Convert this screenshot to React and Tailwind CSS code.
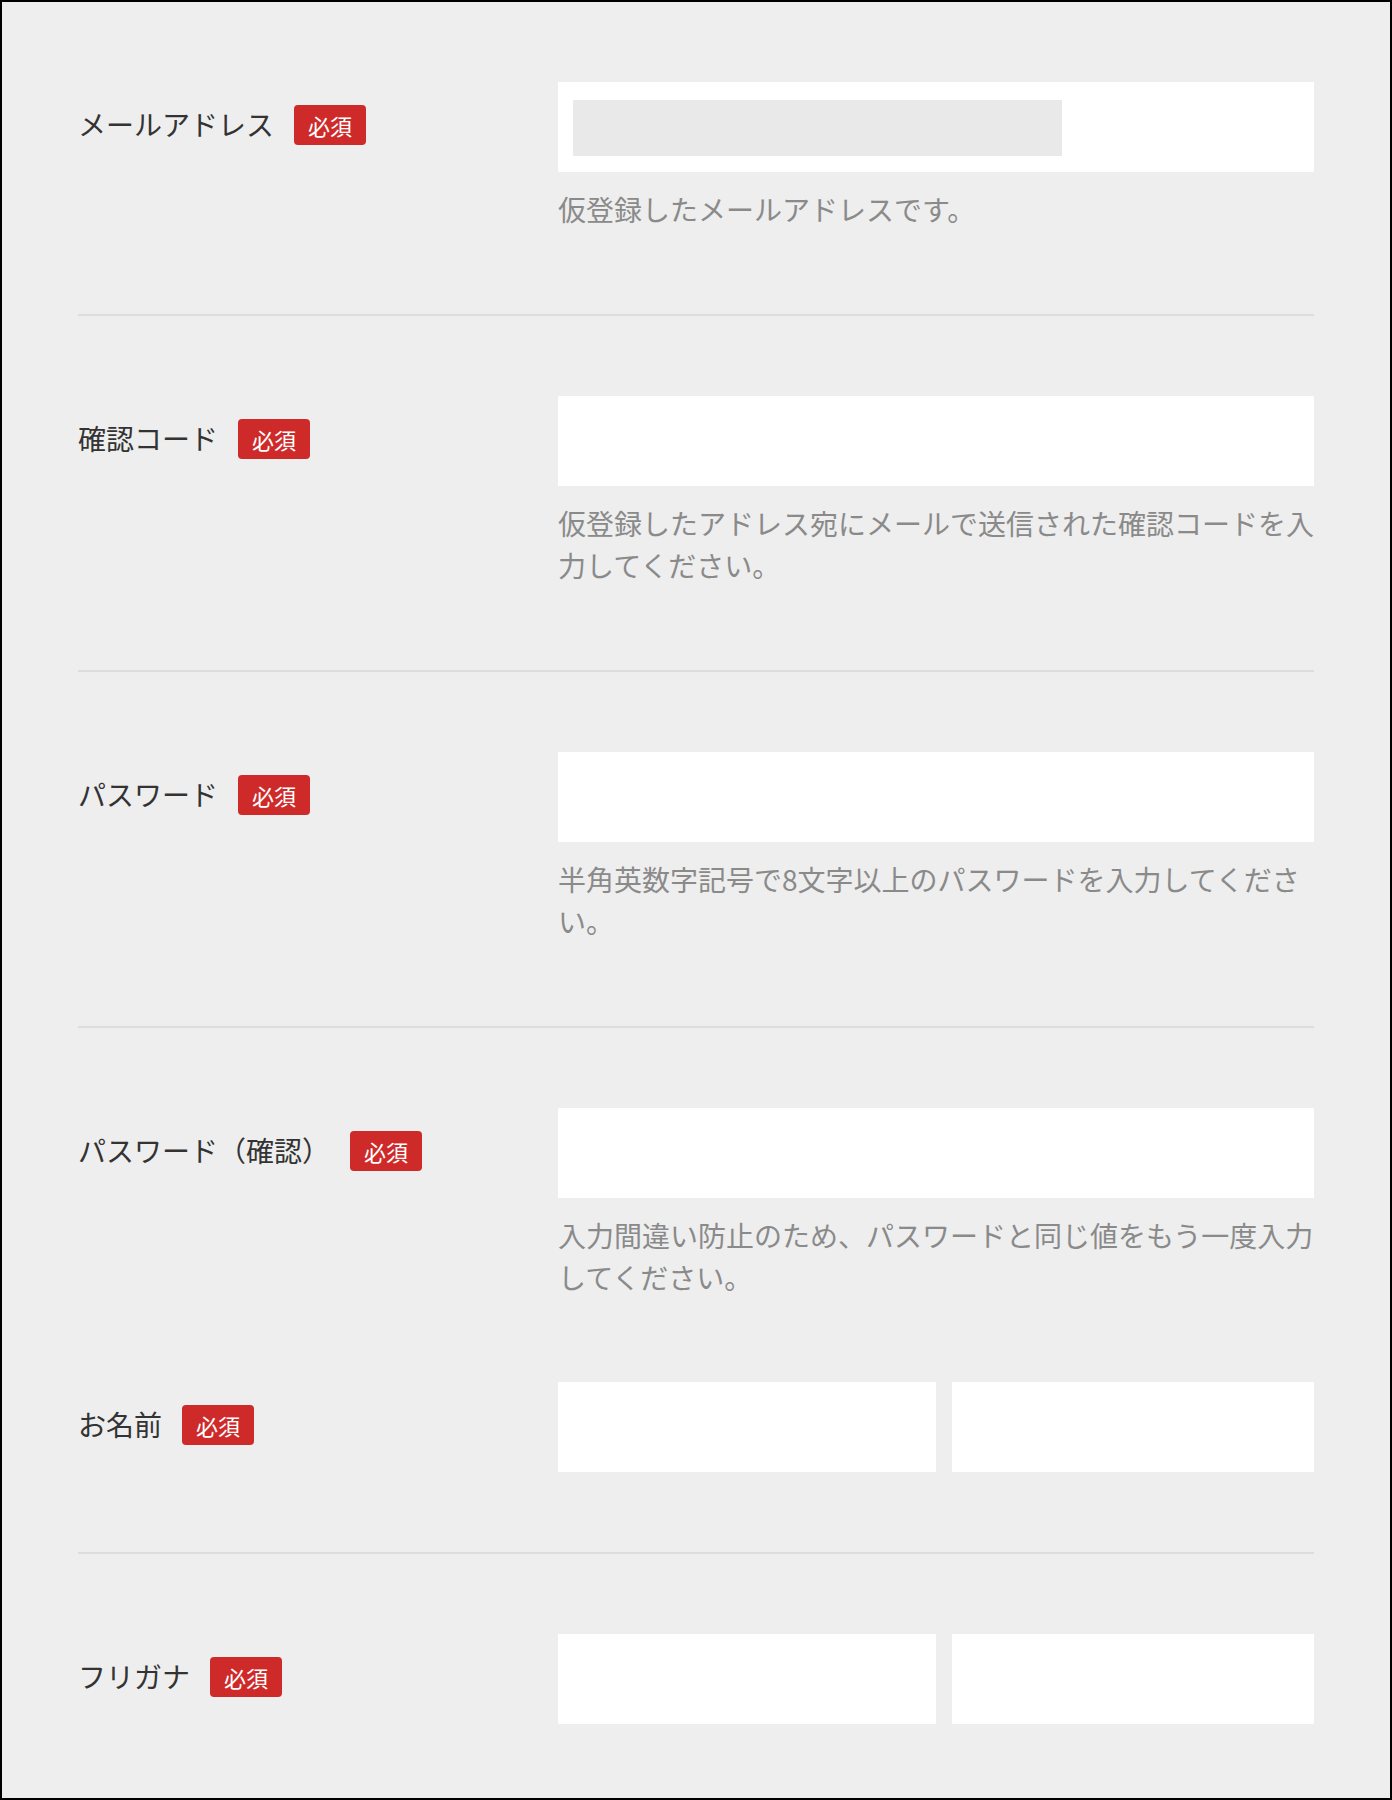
import React from 'react';

const Badge = () => (
    <span className="inline-flex items-center justify-center h-10 w-[72px] rounded bg-[#cf2a2a] text-white text-[22px] leading-none">
        必須
    </span>
);

const Field = ({ label, hint, children }) => (
    <div className="flex">
        <div className="w-[480px] h-[90px] shrink-0 flex items-center gap-5 pb-1">
            <span className="mb-[3px] text-[28px] leading-[42px] text-[#333333]">{label}</span>
            <Badge />
        </div>
        <div className="w-[756px]">
            {children}
            {hint && (
                <p className="mt-4 mb-1 text-[28px] leading-[42px] text-[#8a8a8a]">{hint}</p>
            )}
        </div>
    </div>
);

const TextBox = () => (
    <input type="text" className="block w-full h-[90px] bg-white px-4 outline-none" />
);

const PairBox = () => (
    <div className="flex gap-4">
        <input type="text" className="block w-[378px] h-[90px] bg-white px-4 outline-none" />
        <input type="text" className="block flex-1 min-w-0 h-[90px] bg-white px-4 outline-none" />
    </div>
);

const App = () => {
    return (
        <div className="w-[1392px] h-[1800px] border-2 border-black bg-[#eeeeee] px-[76px] overflow-hidden font-['Noto_Sans_CJK_JP','Noto_Sans',sans-serif]">
            {/* メールアドレス */}
            <section className="py-20 border-b-2 border-[#dddddd]">
                <Field label="メールアドレス" hint="仮登録したメールアドレスです。">
                    <div className="h-[90px] bg-white pl-[15px] pt-[18px]">
                        <input type="text" readOnly className="block w-[489px] h-14 bg-[#e9e9e9] outline-none" />
                    </div>
                </Field>
            </section>

            <section className="py-20 border-b-2 border-[#dddddd]">
                <Field label="確認コード" hint="仮登録したアドレス宛にメールで送信された確認コードを入力してください。">
                    <TextBox />
                </Field>
            </section>

            <section className="py-20 border-b-2 border-[#dddddd]">
                <Field label="パスワード" hint="半角英数字記号で8文字以上のパスワードを入力してください。">
                    <TextBox />
                </Field>
            </section>

            {/* password confirm + name share one block */}
            <section className="py-20 border-b-2 border-[#dddddd] flex flex-col gap-20">
                <Field label="パスワード（確認）" hint="入力間違い防止のため、パスワードと同じ値をもう一度入力してください。">
                    <TextBox />
                </Field>
                <Field label="お名前">
                    <PairBox />
                </Field>
            </section>

            <section className="pt-20">
                <Field label="フリガナ">
                    <PairBox />
                </Field>
            </section>
        </div>
    );
};

export default App;
